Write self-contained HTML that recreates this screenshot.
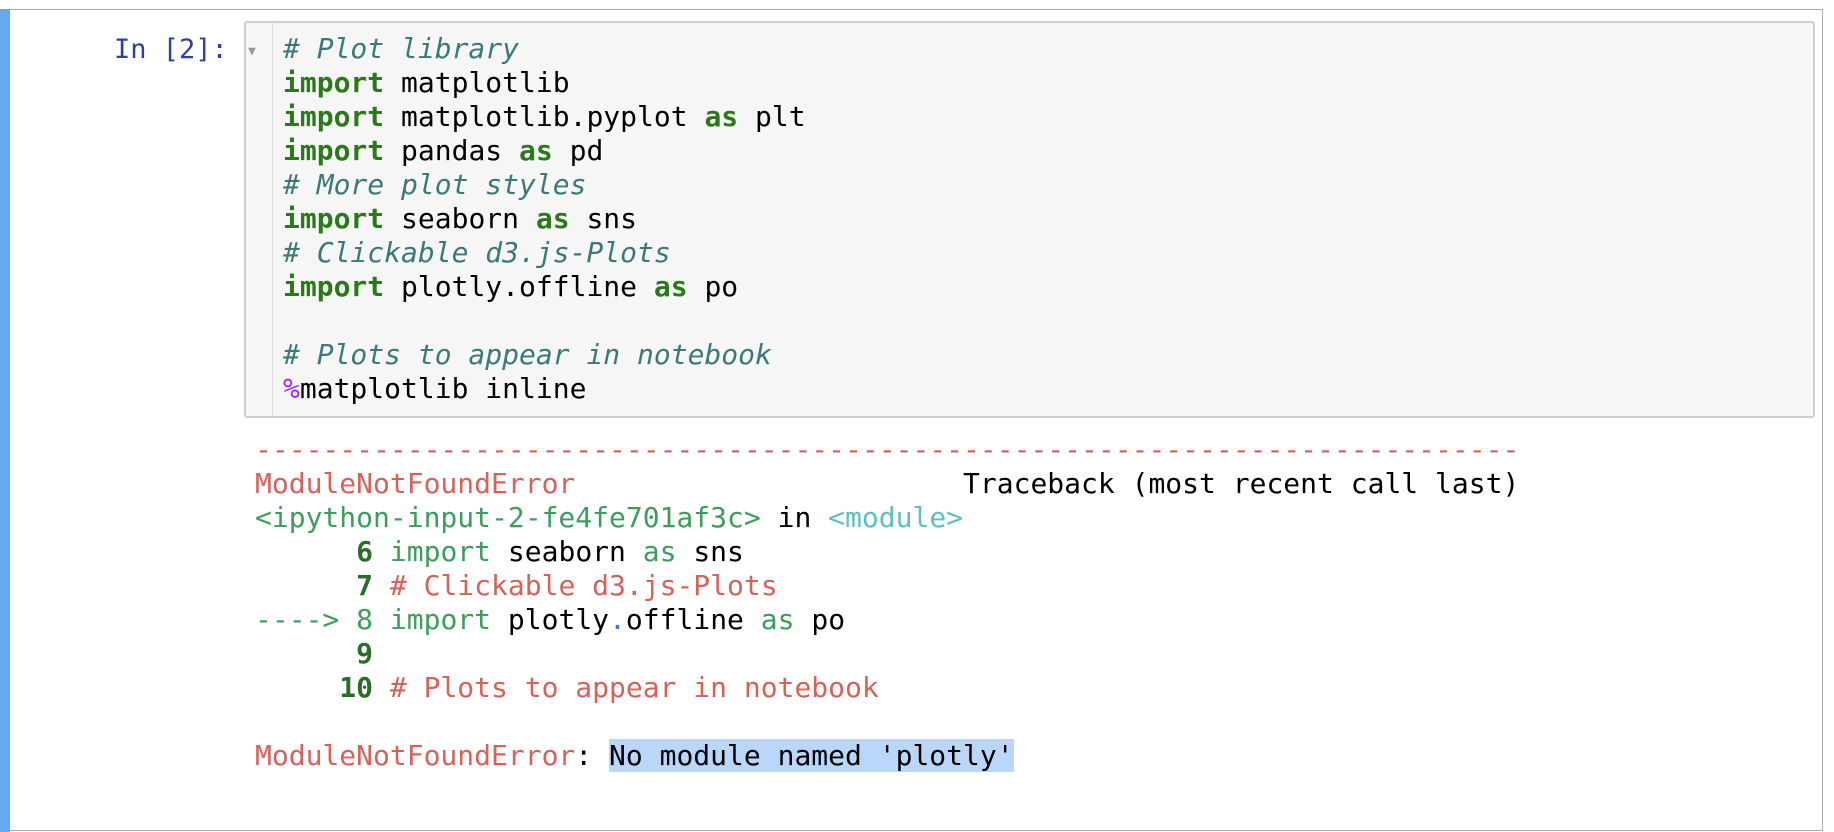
<!DOCTYPE html>
<html><head><meta charset="utf-8"><style>
html,body{margin:0;padding:0;background:#fff;width:1834px;height:832px;overflow:hidden;}
body{position:relative;font-family:"DejaVu Sans Mono","Liberation Mono",monospace;}
.bar{position:absolute;left:0;top:9px;width:10px;height:830px;background:#66a9f0;}
.cell{position:absolute;left:9px;top:9px;width:1813px;height:820px;border:1px solid #aaa;border-left:none;}
.prompt{position:absolute;left:114px;top:33px;font-size:27px;color:#303f9f;line-height:34px;}
.box{position:absolute;left:244px;top:21px;width:1571px;height:397px;background:#f6f6f6;border:2px solid #cfcfcf;border-radius:3px;box-sizing:border-box;}
.gut{position:absolute;left:272px;top:23px;width:1px;height:393px;background:#ddd;}
.tri{position:absolute;left:248px;top:44px;font-size:13px;color:#999;}
pre{margin:0;position:absolute;font-family:inherit;font-size:28px;line-height:34px;white-space:pre;}
.code{left:283px;top:32px;color:#000;}
.k{color:#2a7a19;font-weight:bold;}
.c{color:#3a7a78;font-style:italic;}
.m{color:#aa22ff;}
.out{left:255px;top:433px;color:#000;}
.r{color:#d6625a;}
.g{color:#3c9d5d;}
.gb{color:#2a6e2a;font-weight:bold;}
.cy{color:#60c0c0;}
.bl{color:#3a7fd8;}
.hl{background:#bad6fa;}
</style></head><body>
<div class="bar"></div>
<div class="cell"></div>
<div class="prompt">In [2]:</div>
<div class="box"></div>
<div class="gut"></div>
<div class="tri">▼</div>
<pre class="code"><span class="c"># Plot library</span>
<span class="k">import</span> matplotlib
<span class="k">import</span> matplotlib.pyplot <span class="k">as</span> plt
<span class="k">import</span> pandas <span class="k">as</span> pd
<span class="c"># More plot styles</span>
<span class="k">import</span> seaborn <span class="k">as</span> sns
<span class="c"># Clickable d3.js-Plots</span>
<span class="k">import</span> plotly.offline <span class="k">as</span> po

<span class="c"># Plots to appear in notebook</span>
<span class="m">%</span>matplotlib inline</pre>
<pre class="out"><span class="r">---------------------------------------------------------------------------</span>
<span class="r">ModuleNotFoundError</span>                       Traceback (most recent call last)
<span class="g">&lt;ipython-input-2-fe4fe701af3c&gt;</span> in <span class="cy">&lt;module&gt;</span>
<span class="gb">      6</span> <span class="g">import</span> seaborn <span class="g">as</span> sns
<span class="gb">      7</span> <span class="r"># Clickable d3.js-Plots</span>
<span class="g">----&gt; 8</span> <span class="g">import</span> plotly<span class="bl">.</span>offline <span class="g">as</span> po
<span class="gb">      9</span> 
<span class="gb">     10</span> <span class="r"># Plots to appear in notebook</span>

<span class="r">ModuleNotFoundError</span>: <span class="hl">No module named 'plotly'</span></pre>
</body></html>
